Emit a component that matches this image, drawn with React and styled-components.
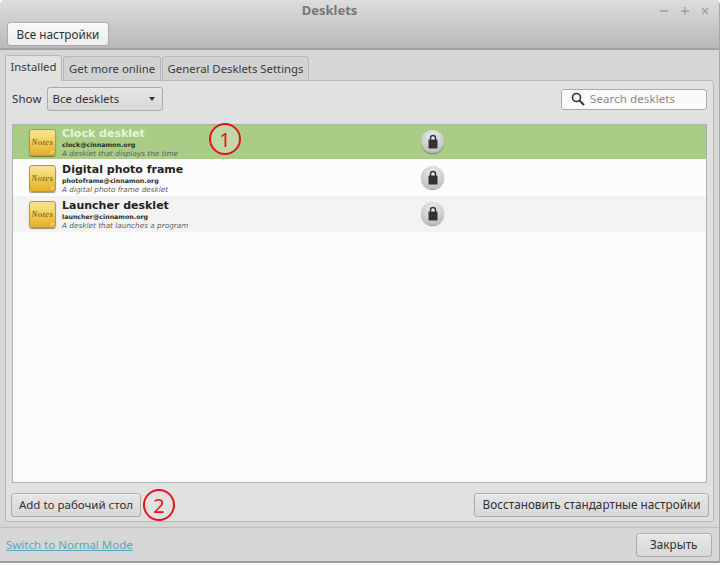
import React from 'react';
import styled, { createGlobalStyle } from 'styled-components';

const GlobalStyle = createGlobalStyle`
  html, body {
    margin: 0;
    padding: 0;
    background: #fff;
  }
  * {
    box-sizing: border-box;
  }
`;

const Window = styled.div`
  width: 720px;
  height: 563px;
  display: flex;
  flex-direction: column;
  background: #d6d6d6;
  border-radius: 5px 5px 0 0;
  border-right: 1px solid #a8a8a8;
  border-bottom: 2px solid #9c9c9c;
  font-family: 'Noto Sans', sans-serif;
  font-size: 11.5px;
  color: #303030;
  overflow: hidden;
`;
const Header = styled.header`
  height: 50px;
  flex: none;
  padding: 0 7px;
  background: linear-gradient(#dcdcdc, #b9b9b9);
  border-bottom: 2px solid #a2a2a2;
  position: relative;
`;
const Title = styled.div`
  height: 22px;
  line-height: 21px;
  text-align: center;
  font-weight: 700;
  font-size: 13px;
  color: #777;
  padding-right: 60px;
`;
const Controls = styled.div`
  position: absolute;
  top: 6px;
  right: 9px;
  display: flex;
  gap: 10.5px;
`;
const Button = styled.button`
  height: 24px;
  padding: 0 ${(p) => p.$pad || 7}px;
  border: 1px solid #ababab;
  border-radius: 3px;
  background: ${(p) => (p.$light ? 'linear-gradient(#f8f8f8, #ededed)' : 'linear-gradient(#e6e6e6, #d8d8d8)')};
  box-shadow: inset 0 1px 0 rgba(255, 255, 255, 0.6);
  font: 11.75px 'Noto Sans', sans-serif;
  color: #303030;
  white-space: nowrap;
`;
const ActionButton = styled(Button)`
  padding-bottom: 2px;
`;
const AddButton = styled(ActionButton)`
  width: 130px;
  padding-left: 0;
  padding-right: 0;
  font-size: 11.5px;
`;
const Body = styled.div`
  flex: 1;
  display: flex;
  flex-direction: column;
  padding: 5px 0 0 5px;
`;
const Tabs = styled.div`
  display: flex;
  height: 26px;
  gap: 1.5px;
  margin-bottom: -1px;
  position: relative;
  z-index: 1;
`;
const Tab = styled.div`
  padding: 0 4.5px;
  font-size: 11.35px;
  line-height: ${(p) => (p.$active ? '22px' : '24px')};
  height: ${(p) => (p.$active ? '26px' : '25px')};
  margin-top: ${(p) => (p.$active ? '0' : '1px')};
  background: ${(p) => (p.$active ? '#e1e1e1' : '#d2d2d2')};
  border: 1px solid #b8b8b8;
  border-bottom: ${(p) => (p.$active ? 'none' : '1px solid #b8b8b8')};
  border-radius: 3px 3px 0 0;
  color: #3a3a3a;
`;
const Panel = styled.div`
  width: 709px;
  height: 442px;
  display: flex;
  flex-direction: column;
  padding: 6px 4px 4px 5px;
  background: #e1e1e1;
  border: 1px solid #b8b8b8;
  border-radius: 0 3px 3px 3px;
`;
const FilterRow = styled.div`
  display: flex;
  align-items: center;
  height: 24px;
  gap: 5px;
  padding: 0 2px 0 1px;
`;
const Label = styled.span`
  letter-spacing: 0.1px;
  margin-top: -2px;
`;
const Combo = styled.div`
  width: 116px;
  height: 24px;
  display: flex;
  align-items: center;
  justify-content: space-between;
  padding: 0 7px 2px 5px;
  border: 1px solid #ababab;
  border-radius: 3px;
  background: linear-gradient(#e6e6e6, #d8d8d8);
`;
const Caret = styled.span`
  width: 0;
  height: 0;
  margin-top: 2px;
  border-left: 3.5px solid transparent;
  border-right: 3.5px solid transparent;
  border-top: 4px solid #333;
`;
const Search = styled.div`
  width: 146px;
  height: 21px;
  margin-left: auto;
  margin-top: 1px;
  display: flex;
  align-items: center;
  gap: 5px;
  padding: 0 9px 2px;
  background: #fafafa;
  border: 1px solid #ababab;
  border-radius: 3px;
  color: #8a8a8a;
  letter-spacing: 0.1px;
`;
const List = styled.div`
  height: 359px;
  flex: none;
  margin: 13px 2px 0 1px;
  background: #fbfbfb;
  border: 1px solid #b0b0b0;
`;
const Row = styled.div`
  height: 36px;
  display: grid;
  grid-template-columns: 49px 359px 1fr;
  align-items: center;
  position: relative;
  background: ${(p) => (p.$selected ? '#a9cd87' : p.$alt ? '#f3f3f3' : '#fcfcfc')};
  &:first-child {
    height: 35px;
    border-bottom: 1px solid #fcfcfc;
  }
`;
const NoteIcon = styled.div`
  width: 27px;
  height: 27px;
  margin-left: 16px;
  border-radius: 3px;
  border: 1px solid #b09a4a;
  background: linear-gradient(#f6e189 0 14%, #f2cf58 45%, #e6ae2b);
  box-shadow: 0 1px 1px rgba(60, 50, 0, 0.5);
  display: flex;
  align-items: center;
  justify-content: center;
  font: italic 8.5px 'Liberation Serif', serif;
  letter-spacing: 0.5px;
  color: #5a4f20;
  position: relative;
  &::after {
    content: '';
    position: absolute;
    right: 0;
    bottom: 0;
    width: 4px;
    height: 4px;
    background: linear-gradient(135deg, rgba(251, 238, 176, 0.55) 50%, transparent 50%);
  }
`;
const Info = styled.div`
  display: flex;
  flex-direction: column;
  font-family: 'DejaVu Sans', sans-serif;
`;
const Name = styled.div`
  font-size: 11px;
  line-height: 14px;
  font-weight: 700;
  color: ${(p) => (p.$selected ? '#e8f2dd' : '#222')};
`;
const Uuid = styled.div`
  font-size: 6.3px;
  line-height: 8px;
  font-weight: 700;
  color: #2a2a2a;
`;
const Description = styled.div`
  font-size: 7.3px;
  line-height: 9px;
  font-style: italic;
  color: #5f5f5f;
`;
const LockBadge = styled.div`
  width: 23px;
  height: 23px;
  margin-top: -1px;
  border-radius: 50%;
  background: radial-gradient(circle at 50% 30%, #efefef, #c4c4c4 70%, #9c9c9c);
  box-shadow: 0 1px 1px rgba(0, 0, 0, 0.35);
  display: flex;
  align-items: center;
  justify-content: center;
`;
const Callout = styled.div`
  width: 32px;
  height: 32px;
  margin: -4px 0;
  border: 2.5px solid #e8101c;
  border-radius: 50%;
  display: flex;
  align-items: center;
  justify-content: center;
  font: 20px 'Noto Sans', sans-serif;
  color: #e8101c;
  background: ${(p) => (p.$glass ? 'rgba(255,255,255,0.25)' : 'transparent')};
`;
const RowCallout = styled(Callout)`
  position: absolute;
  left: 196px;
  top: -2px;
  margin: 0;
`;
const PanelActions = styled.div`
  display: flex;
  align-items: center;
  justify-content: space-between;
  margin-top: 10px;
`;
const ActionGroup = styled.div`
  display: flex;
  align-items: center;
  gap: 2px;
`;
const Footer = styled.div`
  flex: 1;
  margin-top: 5px;
  margin-left: -5px;
  border-top: 1px solid #bdbdbd;
  display: flex;
  align-items: center;
  justify-content: space-between;
  padding: 0 7px 0 6px;
`;
const ModeLink = styled.a`
  color: #55a9b8;
  text-decoration: underline;
`;

const desklets = [
  { name: 'Clock desklet', uuid: 'clock@cinnamon.org', description: 'A desklet that displays the time' },
  { name: 'Digital photo frame', uuid: 'photoframe@cinnamon.org', description: 'A digital photo frame desklet' },
  { name: 'Launcher desklet', uuid: 'launcher@cinnamon.org', description: 'A desklet that launches a program' },
];

const WindowIcon = ({ d }) => (
  <svg width="10" height="10" viewBox="0 0 10 10">
    <path d={d} fill="none" stroke="#a0a0a0" strokeWidth="1.4" />
  </svg>
);

const LockIcon = () => (
  <svg width="12" height="15" viewBox="0 0 12 15">
    <path d="M3.5 7V4a2.5 2.5 0 0 1 5 0V7" fill="none" stroke="#333" strokeWidth="1.5" />
    <rect x="1.5" y="5.5" width="9" height="9" rx="0.8" fill="#333" />
  </svg>
);

const SearchIcon = () => (
  <svg width="14" height="14" viewBox="0 0 14 14">
    <circle cx="5.5" cy="5.5" r="4" fill="none" stroke="#333" strokeWidth="1.6" />
    <path d="M8.6 8.6L13 13" stroke="#333" strokeWidth="2" />
  </svg>
);

function App() {
  return (
    <React.Fragment>
      <GlobalStyle />
      <Window>
        <Header>
          <Title>Desklets</Title>
          <Controls>
            <WindowIcon d="M1 5H9" />
            <WindowIcon d="M1 5H9M5 1V9" />
            <WindowIcon d="M2 2L8 8M8 2L2 8" />
          </Controls>
          <Button $light $pad={8.5}>Все настройки</Button>
        </Header>
        <Body>
          <Tabs>
            <Tab $active>Installed</Tab>
            <Tab>Get more online</Tab>
            <Tab>General Desklets Settings</Tab>
          </Tabs>
          <Panel>
            <FilterRow>
              <Label>Show</Label>
              <Combo>
                Все desklets
                <Caret />
              </Combo>
              <Search>
                <SearchIcon />
                Search desklets
              </Search>
            </FilterRow>
            <List>
              {desklets.map((desklet, index) => (
                <Row key={desklet.uuid} $selected={index === 0} $alt={index === 2}>
                  <NoteIcon>Notes</NoteIcon>
                  <Info>
                    <Name $selected={index === 0}>{desklet.name}</Name>
                    <Uuid>{desklet.uuid}</Uuid>
                    <Description>{desklet.description}</Description>
                  </Info>
                  <LockBadge>
                    <LockIcon />
                  </LockBadge>
                  {index === 0 && <RowCallout $glass>1</RowCallout>}
                </Row>
              ))}
            </List>
            <PanelActions>
              <ActionGroup>
                <AddButton>Add to рабочий стол</AddButton>
                <Callout>2</Callout>
              </ActionGroup>
              <ActionButton $pad={7.5}>Восстановить стандартные настройки</ActionButton>
            </PanelActions>
          </Panel>
          <Footer>
            <ModeLink>Switch to Normal Mode</ModeLink>
            <ActionButton $pad={13.5}>Закрыть</ActionButton>
          </Footer>
        </Body>
      </Window>
    </React.Fragment>
  );
}

export default App;
